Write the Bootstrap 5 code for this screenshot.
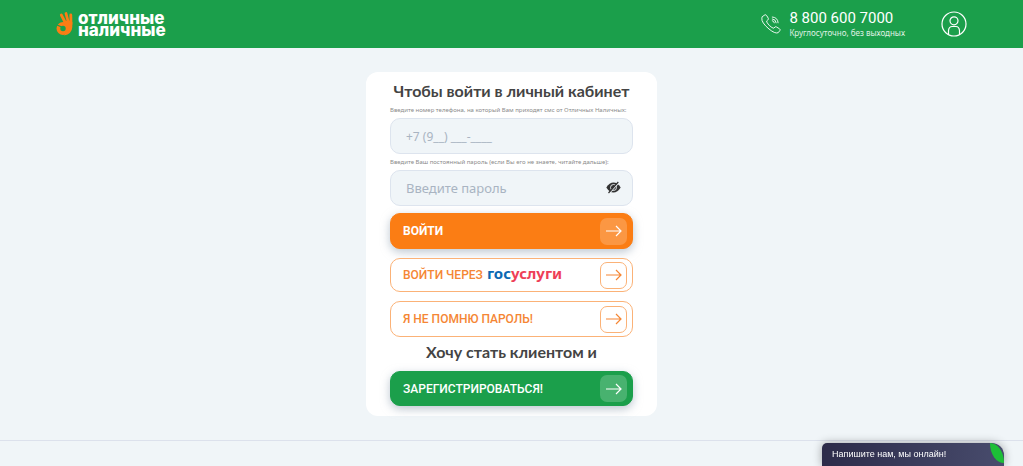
<!DOCTYPE html>
<html lang="ru">
<head>
<meta charset="utf-8">
<meta name="viewport" content="width=device-width, initial-scale=1">
<title>Отличные наличные</title>
<link href="https://cdn.jsdelivr.net/npm/bootstrap@5.3.0/dist/css/bootstrap.min.css" rel="stylesheet">
<script src="https://cdn.jsdelivr.net/npm/bootstrap@5.3.0/dist/js/bootstrap.bundle.min.js" defer></script>
<style>
  body { background: #f0f5f8; color: #444; font-family: "Open Sans", "Noto Sans", sans-serif; min-height: 100vh; }
  .site-header { background: #1b9f4b; height: 48px; padding: 0 56px; }
  .brand-text { font: 800 17px/12px "Inter", sans-serif; }
  .phone-no { font: 400 15px/17px "Roboto", sans-serif; }
  .phone-note { font: 8px/11px "Noto Sans", sans-serif; opacity: .85; }
  .account-link { margin-left: 36px; }
  .login-card { width: 291px; border-radius: 12px; padding: 8px 24px 10px; }
  .login-title { font: 700 16px/22px "Lato", sans-serif; white-space: nowrap; color: #444; }
  .hint { font: 6px/8px "Noto Sans", sans-serif; color: #8b8b8b; white-space: nowrap; }
  .field { height: 36px; border: 1px solid #dde4ee; border-radius: 10px; background: #f0f5f8; padding: 0 15px; font: 13px/20px "Noto Sans", sans-serif; color: #a9b4c2; }
  .field-phone { font-size: 12px; }
  .field:focus { background: #f0f5f8; border-color: #dde4ee; }
  .field::placeholder { color: #a9b4c2; }
  .field-group { margin-bottom: 7px; }
  .eye { right: 12px; top: 10px; line-height: 0; }
  .action { height: 36px; border-radius: 10px; padding: 0 5px 0 12px; font: 500 12px/16px "Roboto", sans-serif; border: 1px solid #fbb277; color: #f58634; background: #fff; }
  .action:hover { border-color: #f58634; color: #f58634; }
  .action + .action { margin-top: 9px; }
  .action-short { height: 34px; }
  .action-main, .action-main:hover { background: #fb7d14; border-color: #fb7d14; color: #fff; font-weight: 700; box-shadow: 0 3px 10px #9aa9b8aa; }
  .action-join, .action-join:hover { height: 35px; background: #1b9f4b; border-color: #1b9f4b; color: #fff; box-shadow: 0 3px 10px #9aa9b8aa; }
  .arrow-box { width: 27px; height: 27px; border-radius: 7px; border: 1px solid #fbb277; }
  .action-main .arrow-box, .action-join .arrow-box { border: 0; background: #ffffff33; }
  .gos { font: 700 15px/16px "Noto Sans", sans-serif; color: #0b68b3; }
  .gos span { color: #ee3f58; }
  .site-footer { border-top: 1px solid #dce1ec; margin-top: 24px; height: 26px; }
  .chat { right: 19px; bottom: 0; width: 182px; height: 23px; border-radius: 5px 12px 0 0; border: 0; padding: 0 10px; background: linear-gradient(95deg, #2c2b49, #484c6d); color: #fff; font: 9px/23px "Liberation Sans", sans-serif; box-shadow: 0 0 10px #0005; }
  .chat-leaf { right: 0; top: 0; width: 14px; height: 20px; background: #1dbf37; border-radius: 0 14px 0 14px / 0 20px 0 20px; }
</style>
</head>
<body>
<header class="site-header d-flex align-items-center justify-content-between text-white">
  <a href="#" class="d-flex align-items-center text-white text-decoration-none gap-1">
    <svg width="18" height="26" viewBox="0 0 18 26" aria-hidden="true">
      <circle cx="7" cy="17.500" r="4.600" fill="none" stroke="#fb7d14" stroke-width="3.800"/>
      <path d="M9.500 12 5.300 4M12.500 12 10 2.500M15 13 14.800 4" stroke="#fb7d14" stroke-width="2.800" stroke-linecap="round"/>
      <path d="M7 11Q12 8 16.300 11V16Q16 23 8 24.500L11 20Q14 15 9 13Z" fill="#fb7d14"/>
      <path d="M0 13.500 7 16.500" stroke="#1b9f4b" stroke-width="1.200"/>
    </svg>
    <span class="brand-text">отличные<br>наличные</span>
  </a>
  <div class="d-flex align-items-center">
    <svg class="me-2" width="20" height="20" viewBox="0 0 20 20" fill="none" stroke="#fff" stroke-width=".9" stroke-linejoin="round" stroke-linecap="round" aria-hidden="true">
      <path d="M1.500 2.500 4 .8Q5 .5 5.700 1.600L7.300 4.300Q7.700 5.300 6.800 6L5.600 7Q5.500 8.500 8.300 11.400 11.300 14.300 12.800 14.200L14 13Q14.700 12.400 15.600 13L18.500 14.800Q19.500 15.500 18.900 16.500L17.200 18.700Q14 20 8 15 .2 8.500.8 4.500Z"/>
      <path d="M11.300 6.700Q13.200 7 13.300 8.800M11.300 4.900Q14.900 5.200 15.200 8.800M11.300 3Q16.800 3.300 17.100 8.800"/>
    </svg>
    <div>
      <a href="tel:88006007000" class="phone-no d-block text-white text-decoration-none">8 800 600 7000</a>
      <div class="phone-note">Круглосуточно, без выходных</div>
    </div>
    <a href="#" aria-label="Личный кабинет" class="account-link lh-1 text-white">
      <svg width="26" height="26" viewBox="0 0 26 26" fill="none" stroke="#fff" stroke-width="1.200">
        <circle cx="13" cy="13" r="12"/><circle cx="13" cy="9.800" r="4"/><path d="M7.500 23.500V19.500Q8 15.500 11 15.500H15Q18 15.500 18.500 19.500V23.500"/>
      </svg>
    </a>
  </div>
</header>

<main class="d-flex justify-content-center pt-4">
  <form class="login-card bg-white">
    <h1 class="login-title text-center mb-1">Чтобы войти в личный кабинет</h1>
    <label class="hint d-block mb-1" for="phone">Введите номер телефона, на который Вам приходят смс от Отличных Наличных:</label>
    <input id="phone" type="tel" class="form-control field field-phone shadow-none" placeholder="+7 (9__) ___-____">
    <label class="hint d-block my-1" for="password">Введите Ваш постоянный пароль (если Вы его не знаете, читайте дальше):</label>
    <div class="field-group position-relative">
      <input id="password" type="password" class="form-control field shadow-none" placeholder="Введите пароль">
      <button type="button" class="eye btn p-0 border-0 position-absolute" aria-label="Показать пароль">
        <svg width="15" height="15" viewBox="0 0 15 15"><path d="M.3 7.500Q3.500 2.500 7.500 2.500T14.700 7.500Q11.500 12.500 7.500 12.500T.3 7.500Z" fill="#333"/><circle cx="7.500" cy="7.500" r="3" fill="none" stroke="#f0f5f8" stroke-width=".9"/><path d="M3.300 13.300 13 2.500" stroke="#f0f5f8" stroke-width="1.200"/><path d="M2.500 13 12.300 2" stroke="#333" stroke-width="1.200"/></svg>
      </button>
    </div>
    <button type="submit" class="action action-main btn d-flex w-100 align-items-center justify-content-between">ВОЙТИ
      <span class="arrow-box d-flex align-items-center justify-content-center"><svg width="17" height="12" viewBox="0 0 17 12" fill="none" stroke="currentColor" stroke-width="1.200"><path d="M1 6H16M11 1 16 6 11 11"/></svg></span>
    </button>
    <button type="button" class="action action-short btn d-flex w-100 align-items-center justify-content-between"><span class="d-flex align-items-center gap-1">ВОЙТИ ЧЕРЕЗ <span class="gos mb-1">гос<span>услуги</span></span></span>
      <span class="arrow-box d-flex align-items-center justify-content-center"><svg width="17" height="12" viewBox="0 0 17 12" fill="none" stroke="currentColor" stroke-width="1.200"><path d="M1 6H16M11 1 16 6 11 11"/></svg></span>
    </button>
    <button type="button" class="action btn d-flex w-100 align-items-center justify-content-between">Я НЕ ПОМНЮ ПАРОЛЬ!
      <span class="arrow-box d-flex align-items-center justify-content-center"><svg width="17" height="12" viewBox="0 0 17 12" fill="none" stroke="currentColor" stroke-width="1.200"><path d="M1 6H16M11 1 16 6 11 11"/></svg></span>
    </button>
    <h2 class="login-title text-center mt-1 mb-2">Хочу стать клиентом и</h2>
    <button type="button" class="action action-join btn d-flex w-100 align-items-center justify-content-between">ЗАРЕГИСТРИРОВАТЬСЯ!
      <span class="arrow-box d-flex align-items-center justify-content-center"><svg width="17" height="12" viewBox="0 0 17 12" fill="none" stroke="currentColor" stroke-width="1.200"><path d="M1 6H16M11 1 16 6 11 11"/></svg></span>
    </button>
  </form>
</main>
<footer class="site-footer"></footer>
<button type="button" class="chat position-fixed text-start">Напишите нам, мы онлайн!<span class="chat-leaf position-absolute"></span></button>
</body>
</html>
